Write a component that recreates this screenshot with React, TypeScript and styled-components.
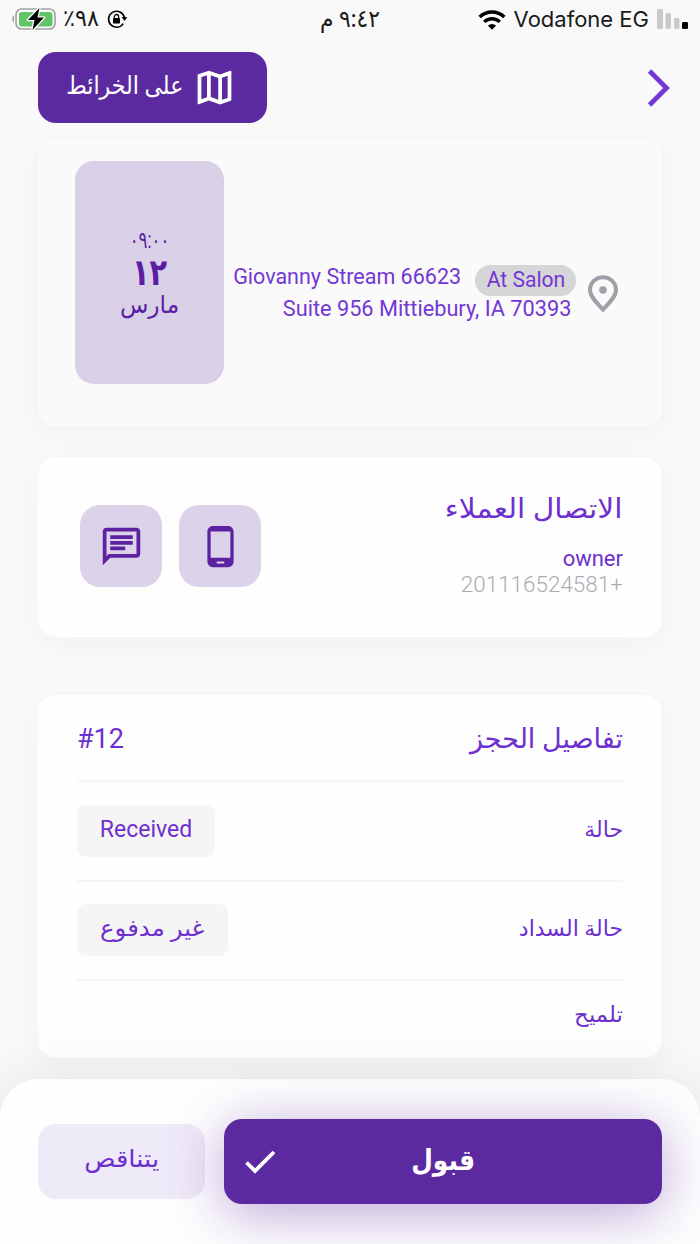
import React from "react";
import styled, { createGlobalStyle } from "styled-components";
import { MdOutlineMap, MdOutlineChat, MdPhoneAndroid } from "react-icons/md";

const Global = createGlobalStyle`
  * { box-sizing: border-box; }
  body { margin: 0; background: #f9f9f9; }
`;

const Screen = styled.div`
  width: 700px;
  height: 1244px;
  overflow: hidden;
  display: flex;
  flex-direction: column;
  background: #f9f9f9;
  font-family: Roboto, "DejaVu Sans", sans-serif;
`;

const Label = styled.span<{ $size: number; $line: number; $color?: string; $weight?: number; $stretch?: number; $origin?: string; $font?: string; $below?: number }>`
  display: block;
  white-space: nowrap;
  font-size: ${(p) => p.$size}px;
  line-height: ${(p) => p.$line}px;
  height: ${(p) => p.$line}px;
  margin-bottom: ${(p) => p.$below ?? 0}px;
  color: ${(p) => p.$color ?? "#6d2fcf"};
  font-weight: ${(p) => p.$weight ?? 400};
  font-family: ${(p) => p.$font ?? "inherit"};
  transform: scaleX(${(p) => p.$stretch ?? 1});
  transform-origin: ${(p) => p.$origin ?? "right"} center;
`;

const StatusBar = styled.div`
  height: 38px;
  flex: none;
  display: grid;
  grid-template-columns: 1fr auto 1fr;
  align-items: center;
  padding: 0 12px 0 11px;
`;

const StatusGroup = styled.div<{ $end?: boolean }>`
  display: flex;
  align-items: center;
  gap: ${(p) => (p.$end ? 8 : 5)}px;
  justify-content: ${(p) => (p.$end ? "flex-end" : "flex-start")};
`;

const Header = styled.header`
  height: 101px;
  flex: none;
  display: flex;
  justify-content: space-between;
  align-items: flex-start;
  padding: 14px 29px 0 38px;
`;

const MapButton = styled.button`
  width: 229px;
  height: 71px;
  border: 0;
  border-radius: 18px;
  background: #5c2aa0;
  color: #fff;
  display: flex;
  align-items: center;
  justify-content: flex-end;
  gap: 9px;
  padding: 0 30px 0 0;
  font-family: inherit;
`;

const BackIcon = styled.svg`
  margin-top: 17px;
`;

const Card = styled.section<{ $height: number; $flat?: boolean }>`
  margin: 0 38px;
  height: ${(p) => p.$height}px;
  flex: none;
  border-radius: 18px;
  background: ${(p) => (p.$flat ? "#fafafa" : "#fefefe")};
  box-shadow: 0 6px 26px rgba(0, 0, 0, 0.035);
`;

const BookingCard = styled(Card)`
  display: flex;
  align-items: flex-start;
  padding: 22px 43px 0 37px;
`;

const DateTile = styled.div`
  width: 149px;
  height: 223px;
  flex: none;
  border-radius: 19px;
  background: #d9cfe7;
  display: flex;
  flex-direction: column;
  align-items: center;
  padding-top: 64px;
`;

const Address = styled.div`
  flex: 1;
  min-width: 0;
  display: flex;
  flex-direction: column;
  align-items: flex-end;
  padding: 104px 5px 0 0;
`;

const AddressLine = styled.div<{ $end?: number }>`
  display: flex;
  align-items: flex-start;
  gap: 14px;
  padding-right: ${(p) => p.$end ?? 0}px;
`;

const PlacePill = styled.span`
  width: 101px;
  height: 31px;
  border-radius: 16px;
  background: #d6d5d8;
  display: flex;
  justify-content: center;
`;

const PinIcon = styled.svg`
  margin: 114px 0 0 6px;
  flex: none;
`;

const ContactCard = styled(Card)`
  margin-top: 30px;
  display: flex;
  justify-content: space-between;
  padding: 37px 39px 0 42px;
`;

const ContactActions = styled.div`
  display: flex;
  gap: 17px;
  padding-top: 11px;
`;

const ActionTile = styled.button`
  width: 82px;
  height: 82px;
  padding: 0;
  border: 0;
  border-radius: 20px;
  background: #dcd3ea;
  color: #5c22a2;
  display: grid;
  place-items: center;
`;

const ContactText = styled.div`
  display: flex;
  flex-direction: column;
  align-items: flex-end;
`;

const DetailsCard = styled(Card)`
  margin-top: 58px;
  padding: 0 39px;
`;

const Row = styled.div<{ $height: number; $line?: boolean; $top: number }>`
  height: ${(p) => p.$height}px;
  display: flex;
  justify-content: space-between;
  align-items: flex-start;
  padding-top: ${(p) => p.$top}px;
  border-bottom: ${(p) => (p.$line ? "2px solid #f5f5f5" : "0")};
`;

const Chip = styled.span<{ $width: number }>`
  width: ${(p) => p.$width}px;
  height: 52px;
  border-radius: 9px;
  background: #f5f5f5;
  display: flex;
  justify-content: center;
  padding-top: 9px;
`;

const RowName = styled.div`
  padding-top: 9px;
`;

const Footer = styled.footer`
  margin-top: 21px;
  height: 165px;
  flex: none;
  border-radius: 38px 38px 0 0;
  background: #fefefe;
  box-shadow: 0 0 56px rgba(0, 0, 0, 0.09);
  display: flex;
  align-items: flex-start;
  gap: 19px;
  padding: 40px 38px 0;
  position: relative;
`;

const DeclineButton = styled.button`
  width: 167px;
  height: 75px;
  margin-top: 5px;
  padding: 15px 0 0;
  border: 0;
  border-radius: 18px;
  background: #efeaf8;
  display: flex;
  justify-content: center;
  font-family: inherit;
`;

const AcceptButton = styled.button`
  flex: 1;
  height: 85px;
  padding: 21px 21px 0;
  border: 0;
  border-radius: 18px;
  background: #5c2aa0;
  box-shadow: 0 9px 56px rgba(92, 42, 160, 0.42);
  display: grid;
  grid-template-columns: 31px 1fr 31px;
  justify-items: center;
  font-family: inherit;
`;

const CheckIcon = styled.svg`
  margin-top: 9px;
`;

const dark = "#1a1a1c";
const deep = "#5a1ea4";

const Battery = () => (
  <svg width="46" height="24" viewBox="0 0 46 24">
    <path d="M3 8.500v7C.5 14.500.5 9.500 3 8.500Z" fill="#a5a5a7" />
    <rect x="5" y="2" width="39" height="20" rx="5.500" fill="none" stroke="#a1a1a3" strokeWidth="1.600" />
    <rect x="8" y="5" width="33.500" height="14.500" rx="3" fill="#61c466" />
    <path d="M28.500 1 17 13h6.500l-2 10L33 10.500h-6.500Z" fill="#000" stroke="#f9f9f9" strokeWidth="2.600" paintOrder="stroke" strokeLinejoin="round" />
  </svg>
);

const LockGlyph = styled.svg`
  margin-left: 3px;
`;

const RotationLock = () => (
  <LockGlyph width="21" height="20" viewBox="0 0 21 20" fill="none" stroke="#000" strokeWidth="1.600">
    <path d="M16.300 14.600A8 8 0 1 1 17.400 8.500" />
    <path d="M14.700 8h5.600l-2.800 4Z" fill="#000" stroke="none" />
    <rect x="6" y="9" width="7" height="5.500" rx=".8" fill="#000" stroke="none" />
    <path d="M7.400 9.500V7.600a2.100 2.100 0 0 1 4.200 0v1.900" strokeWidth="1.300" />
  </LockGlyph>
);

const Wifi = () => (
  <svg width="28" height="21" viewBox="0 0 28 21" fill="none" stroke="#000" strokeWidth="3.600">
    <path d="M1.700 8a17.600 17.600 0 0 1 24.600 0" />
    <path d="M6.200 12.900a11.200 11.200 0 0 1 15.600 0" strokeWidth="3.300" />
    <path d="M14 20.800 9.900 16.600a6 6 0 0 1 8.200 0Z" fill="#000" stroke="none" />
  </svg>
);

const Signal = () => (
  <svg width="31" height="20" viewBox="0 0 31 20">
    <rect x="0" y="0" width="6" height="20" rx="1.500" fill="#c9c9ca" />
    <rect x="8.500" y="4" width="5.500" height="16" rx="1.500" fill="#c9c9ca" />
    <rect x="17" y="9" width="5.500" height="11" rx="1.500" fill="#c9c9ca" />
    <rect x="25" y="13" width="6" height="7" rx="1.300" fill="#000" />
  </svg>
);

export default function App() {
  return (
    <Screen>
      <Global />
      <StatusBar>
        <StatusGroup>
          <Battery />
          <Label dir="rtl" $size={23} $line={26} $color={dark} $stretch={0.97}>٩٨٪</Label>
          <RotationLock />
        </StatusGroup>
        <Label dir="rtl" $size={24} $line={26} $color={dark} $weight={500} $stretch={0.91} $origin="center">٩:٤٢ م</Label>
        <StatusGroup $end>
          <Wifi />
          <Label $size={22} $line={26} $color={dark} $font="Inter, sans-serif">Vodafone EG</Label>
          <Signal />
        </StatusGroup>
      </StatusBar>

      <Header>
        <MapButton>
          <Label dir="rtl" $size={25} $line={40} $color="#fff" $stretch={0.885} $below={4}>على الخرائط</Label>
          <MdOutlineMap size={45} />
        </MapButton>
        <BackIcon width="24" height="38" viewBox="0 0 24 38" fill="none" stroke="#7337d3" strokeWidth="4.800">
          <path d="m2.500 2 17 17-17 17" />
        </BackIcon>
      </Header>

      <BookingCard $height={288} $flat>
        <DateTile>
          <Label dir="rtl" $size={23} $line={32} $color={deep} $origin="center" $stretch={0.72}>٠٩:٠٠</Label>
          <Label dir="rtl" $size={37} $line={32} $color={deep} $weight={700} $origin="center" $stretch={0.78}>١٢</Label>
          <Label dir="rtl" $size={24} $line={32} $color={deep} $origin="center" $stretch={0.97}>مارس</Label>
        </DateTile>
        <Address>
          <AddressLine>
            <Label $size={22} $line={24} $color="#7337d3" $stretch={0.978}>Giovanny Stream 66623</Label>
            <PlacePill>
              <Label $size={22} $line={29} $color="#7337d3" $origin="center" $stretch={0.96}>At Salon</Label>
            </PlacePill>
          </AddressLine>
          <AddressLine $end={5}>
            <Label $size={22} $line={25} $color="#7337d3" $stretch={0.987}>Suite 956 Mittiebury, IA 70393</Label>
          </AddressLine>
        </Address>
        <PinIcon width="32" height="38" viewBox="0 0 32 38" fill="none" stroke="#a19fa8" strokeWidth="4">
          <path d="M16 34.500C10.500 28.500 3 22 3 15a13 12.800 0 0 1 26 0c0 7-7.500 13.500-13 19.500Z" />
          <circle cx="16" cy="15" r="3.800" fill="#a19fa8" stroke="none" />
        </PinIcon>
      </BookingCard>

      <ContactCard $height={180}>
        <ContactActions>
          <ActionTile><MdOutlineChat size={45} /></ActionTile>
          <ActionTile><MdPhoneAndroid size={45} /></ActionTile>
        </ContactActions>
        <ContactText>
          <Label dir="rtl" $size={27} $line={30} $below={21} $stretch={1.1}>الاتصال العملاء</Label>
          <Label $size={22} $line={27}>owner</Label>
          <Label dir="rtl" $size={22} $line={26} $color="#adadb1" $weight={300} $stretch={1.02}>+201116524581</Label>
        </ContactText>
      </ContactCard>

      <DetailsCard $height={363}>
        <Row $height={87} $top={22} $line>
          <Label $size={27} $line={44} $origin="left">#12</Label>
          <Label dir="rtl" $size={27} $line={44}>تفاصيل الحجز</Label>
        </Row>
        <Row $height={100} $top={23} $line>
          <Chip $width={138}><Label $size={23} $line={32} $origin="center">Received</Label></Chip>
          <RowName><Label dir="rtl" $size={22} $line={32}>حالة</Label></RowName>
        </Row>
        <Row $height={99} $top={22} $line>
          <Chip $width={151}><Label dir="rtl" $size={23} $line={32} $origin="center" $stretch={1.06}>غير مدفوع</Label></Chip>
          <RowName><Label dir="rtl" $size={22} $line={32}>حالة السداد</Label></RowName>
        </Row>
        <Row $height={77} $top={9}>
          <span />
          <RowName><Label dir="rtl" $size={22} $line={32} $stretch={1.04}>تلميح</Label></RowName>
        </Row>
      </DetailsCard>

      <Footer>
        <DeclineButton>
          <Label dir="rtl" $size={24} $line={40} $origin="center" $stretch={1.08}>يتناقص</Label>
        </DeclineButton>
        <AcceptButton>
          <CheckIcon width="31" height="26" viewBox="0 0 31 26" fill="none" stroke="#fff" strokeWidth="3.800">
            <path d="m1.500 13.500 8.500 8.500L29 3" />
          </CheckIcon>
          <Label dir="rtl" $size={29} $line={40} $color="#fff" $weight={700} $origin="center" $stretch={0.86}>قبول</Label>
        </AcceptButton>
      </Footer>
    </Screen>
  );
}
